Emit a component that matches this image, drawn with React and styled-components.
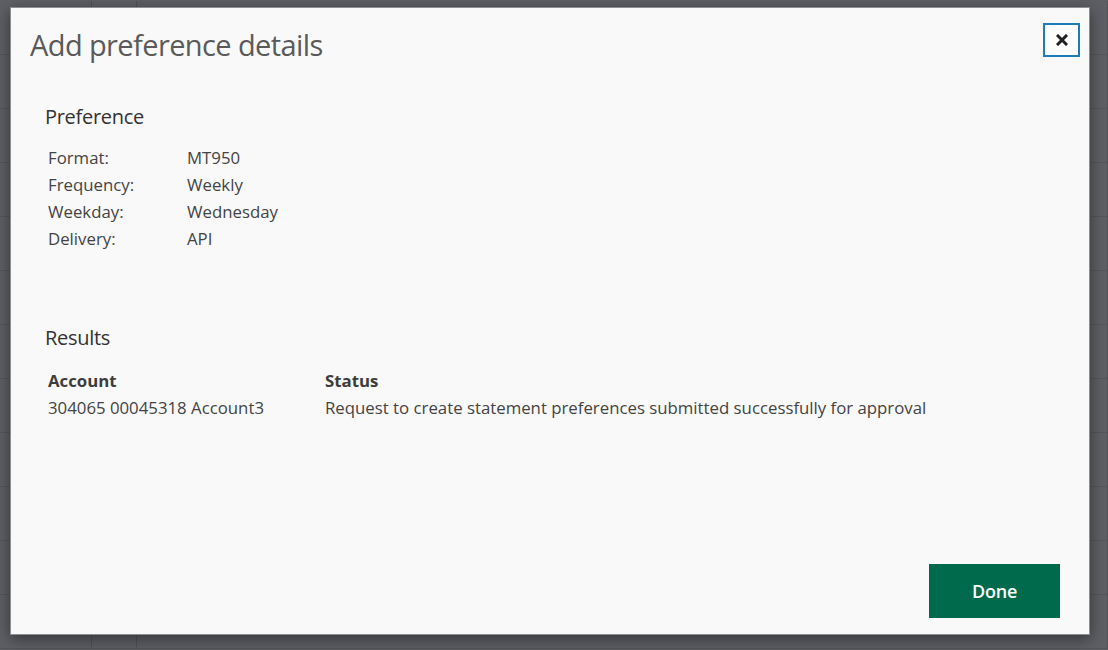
import React from 'react'
import styled, { createGlobalStyle } from 'styled-components'

const GlobalStyle = createGlobalStyle`
  html, body {
    margin: 0;
    padding: 0;
    height: 100%;
  }
  body {
    font-family: "Open Sans", "Noto Sans", sans-serif;
    background: #5d5f64;
    overflow: hidden;
  }
`

const Backdrop = styled.div`
  position: relative;
  width: 1108px;
  height: 650px;
  background: #5d5f64;
  overflow: hidden;
`

const BgTable = styled.div`
  display: grid;
  grid-template-columns: 92px 45px 1fr;
  grid-auto-rows: 54px;
  padding-top: 1px;
`

const BgCell = styled.div`
  border-right: 1px solid #4f5156;
  border-bottom: 1px solid #53555a;
`

const Modal = styled.div`
  position: absolute;
  left: 10px;
  top: 7px;
  width: 1080px;
  height: 628px;
  background: #f9f9f9;
  border: 1px solid #8d8e91;
  box-shadow: 0 4px 14px rgba(0, 0, 0, 0.45);
  display: flex;
  flex-direction: column;
  padding: 20px 20px 16px 19px;
  box-sizing: border-box;
`

const Header = styled.div`
  display: flex;
  justify-content: space-between;
  align-items: flex-start;
`

const Title = styled.h1`
  margin: 0;
  font-size: 29px;
  font-weight: 400;
  color: #5a5a5a;
  letter-spacing: -0.6px;
  line-height: 34px;
`

const CloseButton = styled.button`
  width: 37px;
  height: 34px;
  margin-top: -5px;
  margin-right: -11px;
  border: 2px solid #1f7ab8;
  background: #fdfdfd;
  display: flex;
  align-items: center;
  justify-content: center;
  padding: 0;
  cursor: pointer;
`

const Section = styled.section`
  padding-left: 15px;
  margin-top: ${p => p.$top}px;
`

const SectionTitle = styled.h2`
  margin: 0 0 ${p => p.$gap}px;
  font-size: 20px;
  font-weight: 400;
  color: #333;
  line-height: 26px;
  letter-spacing: -0.3px;
`

const DetailGrid = styled.div`
  display: grid;
  grid-template-columns: ${p => p.$first}px 1fr;
  grid-auto-rows: 27px;
  padding-left: 3px;
  font-size: 16.8px;
  color: #444;
`

const Cell = styled.div`
  line-height: 27px;
  white-space: nowrap;
  font-weight: ${p => (p.$bold ? 700 : 400)};
  color: ${p => (p.$bold ? '#3d3d3d' : '#444')};
`

const Footer = styled.div`
  margin-top: auto;
  display: flex;
  justify-content: flex-end;
  padding-right: 9px;
`

const DoneButton = styled.button`
  width: 131px;
  height: 54px;
  margin-bottom: 0;
  background: #006a4d;
  border: none;
  color: #fff;
  font-family: "Open Sans", "Noto Sans", sans-serif;
  font-size: 18px;
  font-weight: 600;
  letter-spacing: -0.2px;
  cursor: pointer;
`

const details = [
  ['Format:', 'MT950'],
  ['Frequency:', 'Weekly'],
  ['Weekday:', 'Wednesday'],
  ['Delivery:', 'API'],
]

export default function App() {
  return (
    <>
      <GlobalStyle />
      <Backdrop>
        <BgTable>
          {Array.from({ length: 36 }).map((_, i) => (
            <BgCell key={i} />
          ))}
        </BgTable>
        <Modal>
          <Header>
            <Title>Add preference details</Title>
            <CloseButton aria-label="Close">
              <svg width="12" height="12" viewBox="0 0 12 12">
                <path d="M2 2 L10 10 M10 2 L2 10" stroke="#222" strokeWidth="3" strokeLinecap="square" />
              </svg>
            </CloseButton>
          </Header>

          <Section $top={42}>
            <SectionTitle $gap={14}>Preference</SectionTitle>
            <DetailGrid $first={139}>
              {details.map(([label, value]) => (
                <React.Fragment key={label}>
                  <Cell>{label}</Cell>
                  <Cell>{value}</Cell>
                </React.Fragment>
              ))}
            </DetailGrid>
          </Section>

          <Section $top={73}>
            <SectionTitle $gap={16}>Results</SectionTitle>
            <DetailGrid $first={277}>
              <Cell $bold>Account</Cell>
              <Cell $bold>Status</Cell>
              <Cell>304065 00045318 Account3</Cell>
              <Cell>Request to create statement preferences submitted successfully for approval</Cell>
            </DetailGrid>
          </Section>

          <Footer>
            <DoneButton>Done</DoneButton>
          </Footer>
        </Modal>
      </Backdrop>
    </>
  )
}
